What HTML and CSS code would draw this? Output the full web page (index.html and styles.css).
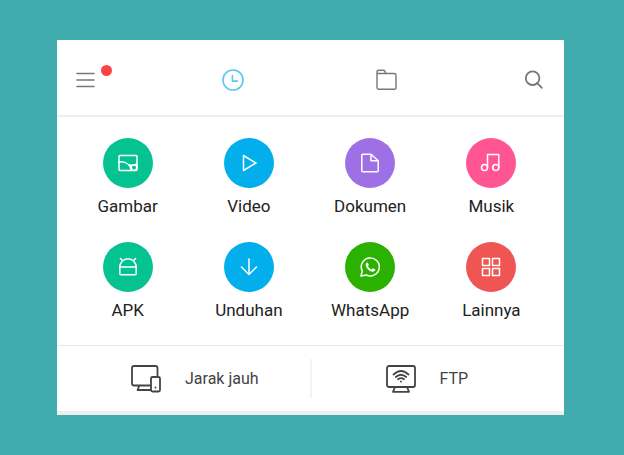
FILE: index.html
```html
<!DOCTYPE html>
<html lang="id">
<head>
    <meta charset="UTF-8">
    <meta name="viewport" content="width=device-width, initial-scale=1.0">
    <title>File Manager</title>
    <link rel="stylesheet" href="styles.css">
</head>
<body>

<main class="panel">
    <header class="topbar">
        <button class="icon-btn menu" aria-label="Menu">
            <svg width="20" height="20" viewBox="0 0 20 20" stroke-width="1.6"><path d="M2 3.5h17M2 10h17M2 16.5h17"/></svg>
            <span class="badge"></span>
        </button>
        <nav class="tabs">
            <button class="icon-btn active" aria-label="Terbaru">
                <svg width="22" height="22" viewBox="0 0 22 22" stroke-width="1.6"><circle cx="11" cy="11" r="10"/><path d="M10.4 6.5v5.6h5"/></svg>
            </button>
            <button class="icon-btn" aria-label="Penyimpanan">
                <svg width="22" height="22" viewBox="0 0 22 22" stroke-width="1.4"><path d="M1 4.500V3q0-1.700 1.700-1.700h4.600q1 0 1.600 1l1.200 2.200h8.200q1.700 0 1.700 1.700v12.600q0 1.400-1.400 1.400H2.400q-1.400 0-1.400-1.400zH10.100"/></svg>
            </button>
        </nav>
        <button class="icon-btn" aria-label="Cari">
            <svg width="20" height="20" viewBox="0 0 20 20" stroke-width="1.8"><circle cx="8.6" cy="8.2" r="6.800"/><path d="M13.200 13.200l4.600 4.600"/></svg>
        </button>
    </header>

    <section class="categories">
        <a class="category" href="#">
            <span class="circle green"><svg width="22" height="22" viewBox="0 0 22 22"><rect x="2" y="3.5" width="18" height="15" rx="1"/><path d="M2 10c6-.8 11 2 12.500 8.500M11.500 12.800q3.500 1.200 8.500-.8"/><circle cx="17" cy="15.600" r="2.800"/></svg></span>
            <span>Gambar</span>
        </a>
        <a class="category" href="#">
            <span class="circle blue"><svg width="22" height="22" viewBox="0 0 22 22"><path d="M5.5 3.5v15L18 11z"/></svg></span>
            <span>Video</span>
        </a>
        <a class="category" href="#">
            <span class="circle purple"><svg width="22" height="22" viewBox="0 0 22 22"><path d="M12 2.3H3.8q-1 0-1 1v15.400q0 1 1 1h14.400q1 0 1-1V8.800zM12 2.300v6.500h7.200"/></svg></span>
            <span>Dokumen</span>
        </a>
        <a class="category" href="#">
            <span class="circle pink"><svg width="22" height="22" viewBox="0 0 22 22"><circle cx="4.500" cy="15.500" r="3"/><circle cx="15.800" cy="15.500" r="3"/><path d="M7.500 15.500V2.500h11.300v13"/></svg></span>
            <span>Musik</span>
        </a>
        <a class="category" href="#">
            <span class="circle green"><svg width="22" height="22" viewBox="0 0 22 22"><path d="M2.800 11a8 8 0 0 1 16.400 0v6.500q0 1.300-1.300 1.300H4.100q-1.300 0-1.300-1.300zM2.800 11h16.400M5.500 4.800L3.500 2.500M16.500 4.800l2-2.300"/></svg></span>
            <span>APK</span>
        </a>
        <a class="category" href="#">
            <span class="circle blue"><svg width="22" height="22" viewBox="0 0 22 22"><path d="M11 3v15.500M3.500 11l7.500 7.500 7.500-7.500"/></svg></span>
            <span>Unduhan</span>
        </a>
        <a class="category" href="#">
            <span class="circle whatsapp"><svg width="22" height="22" viewBox="0 0 22 22"><path d="M2 20l1.200-5.100A9 9 0 1 1 7.300 19z"/><path class="solid" d="M8.300 6.200c-1.600.8-2 2.300-1.200 4.200 1.200 2.700 3.500 4.900 6.300 5.400 1.500.2 2.700-.7 3-2.200l-2.600-1.400-1.300 1.400c-1.700-.7-2.900-1.900-3.600-3.500l1-1.200z"/></svg></span>
            <span>WhatsApp</span>
        </a>
        <a class="category" href="#">
            <span class="circle red"><svg width="22" height="22" viewBox="0 0 22 22"><rect x="2.500" y="2.500" width="7" height="7"/><rect x="12.500" y="2.500" width="7" height="7"/><rect x="2.500" y="12.500" width="7" height="7"/><rect x="12.500" y="12.500" width="7" height="7"/></svg></span>
            <span>Lainnya</span>
        </a>
    </section>

    <footer class="remote">
        <a class="remote-link" href="#">
            <svg width="30" height="28" viewBox="0 0 30 28"><path d="M19.500 20.500H3q-2 0-2-2V3q0-2 2-2h21.500q2 0 2 2v8.500M8.500 20.500L6.500 25h13"/><rect x="20" y="12" width="9" height="14.500" rx="1.500"/><path d="M24.500 22.500v.2"/></svg>
            <span>Jarak jauh</span>
        </a>
        <span class="divider"></span>
        <a class="remote-link" href="#">
            <svg width="30" height="28" viewBox="0 0 30 28"><rect x="1" y="1" width="28" height="21" rx="2"/><path d="M9 22l-2 4.800h16L21 22"/><path d="M7.500 9.500q7.500-7 15 0M9.800 12q5.200-4.600 10.400 0M12 14.300q3-2.400 6 0M15 16.500v.2"/></svg>
            <span>FTP</span>
        </a>
    </footer>
</main>

</body>
</html>
```
FILE: styles.css
```css
* {
    box-sizing: border-box;
}
body {
    margin: 0;
    padding: 40px 60px 40px 57px;
    background-color: #40acae;
    font-family: Roboto, sans-serif;
    color: #222;
}
svg {
    display: block;
    fill: none;
    stroke: currentColor;
    stroke-linecap: round;
    stroke-linejoin: round;
}
a {
    color: inherit;
    text-decoration: none;
}
.panel {
    background-color: #fff;
    border-bottom: 4px solid #eee;
}
.topbar {
    display: flex;
    justify-content: space-between;
    align-items: center;
    height: 77px;
    padding: 4px 20px 0 18px;
    border-bottom: 2px solid #eee;
}
.tabs {
    display: flex;
    gap: 132px;
}
.icon-btn {
    position: relative;
    padding: 0;
    border: none;
    background: none;
    color: #777;
    cursor: pointer;
}
.icon-btn.active {
    color: #5ac8f5;
}
.badge {
    position: absolute;
    top: -5px;
    right: -17px;
    width: 11px;
    height: 11px;
    border-radius: 50%;
    background-color: #ff4343;
}
.categories {
    display: grid;
    grid-template-columns: repeat(4, 1fr);
    row-gap: 24px;
    padding: 21px 12px 23px 10px;
}
.category {
    display: flex;
    flex-direction: column;
    align-items: center;
    gap: 6px;
    font-size: 17px;
    line-height: 24px;
}
.circle {
    display: flex;
    align-items: center;
    justify-content: center;
    width: 50px;
    height: 50px;
    border-radius: 50%;
    color: #fff;
}
.circle svg {
    stroke-width: 1.5;
}
.circle .solid {
    fill: #fff;
    stroke: none;
}
.green {
    background-color: #05c391;
}
.blue {
    background-color: #03aeed;
}
.purple {
    background-color: #9f6fe6;
}
.pink {
    background-color: #ff5592;
}
.whatsapp {
    background-color: #2bb200;
}
.red {
    background-color: #ef5552;
}
.remote {
    display: grid;
    grid-template-columns: 1fr 2px 1fr;
    align-items: center;
    height: 66px;
    border-top: 1px solid #e9e9e9;
    color: #444;
}
.remote-link {
    display: flex;
    align-items: center;
    gap: 24px;
    padding-left: 74px;
    font-size: 16px;
    line-height: 24px;
}
.remote-link svg {
    stroke-width: 1.8;
}
.divider {
    height: 39px;
    background-color: #f3f3f3;
}
```
